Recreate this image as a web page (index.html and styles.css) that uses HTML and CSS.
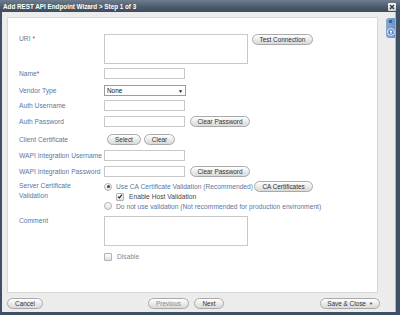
FILE: index.html
```html
<!DOCTYPE html>
<html>
<head>
<meta charset="utf-8">
<link rel="stylesheet" href="styles.css">
</head>
<body>
<div class="dialog">
  <div class="titlebar">
    <span class="title">Add REST API Endpoint Wizard &gt; Step 1 of 3</span>
    <span class="close"><svg width="8" height="8" viewBox="0 0 8 8"><path d="M2 2 L6 6 M6 2 L2 6" stroke="#333" stroke-width="1.3" fill="none"/></svg></span>
  </div>
  <div class="frame">
    <div class="main">
      <div class="pane">
        <div class="form">
          <div class="row r-uri">
            <div class="label top">URI <span class="req">*</span></div>
            <div class="textarea"></div>
            <span class="btn btn-test">Test Connection</span>
          </div>
          <div class="row r-name">
            <div class="label">Name<span class="req">*</span></div>
            <div class="input"></div>
          </div>
          <div class="row r-vendor">
            <div class="label">Vendor Type</div>
            <div class="select"><span>None</span><span class="arrow">▼</span></div>
          </div>
          <div class="row r-authu">
            <div class="label">Auth Username</div>
            <div class="input"></div>
          </div>
          <div class="row r-authp">
            <div class="label">Auth Password</div>
            <div class="input"></div>
            <span class="btn btn-clear">Clear Password</span>
          </div>
          <div class="row r-cert">
            <div class="label">Client Certificate</div>
            <span class="btn btn-select">Select</span>
            <span class="btn btn-clr">Clear</span>
          </div>
          <div class="row r-wapiu">
            <div class="label">WAPI Integration Username</div>
            <div class="input"></div>
          </div>
          <div class="row r-wapip">
            <div class="label">WAPI Integration Password</div>
            <div class="input"></div>
            <span class="btn btn-clear">Clear Password</span>
          </div>
          <div class="row r-server">
            <div class="label top">Server Certificate<br>Validation</div>
            <div class="options">
              <div class="opt opt1"><span class="radio checked"></span><span class="otext">Use CA Certificate Validation (Recommended)</span><span class="btn btn-ca">CA Certificates</span></div>
              <div class="opt opt2"><span class="check checked"><svg width="7" height="7" viewBox="0 0 7 7"><path d="M1.2 3.6 L2.8 5.2 L5.8 1.4" stroke="#222" stroke-width="1.3" fill="none"/></svg></span><span class="otext dark">Enable Host Validation</span></div>
              <div class="opt opt3"><span class="radio"></span><span class="otext">Do not use validation (Not recommended for production environment)</span></div>
            </div>
          </div>
          <div class="row r-comment">
            <div class="label top">Comment</div>
            <div class="textarea"></div>
          </div>
          <div class="row r-disable">
            <div class="label"></div>
            <span class="check"></span><span class="dtext">Disable</span>
          </div>
        </div>
      </div>
      <div class="side">
        <div class="tab">
          <span class="chev">«</span>
          <svg class="help" width="8" height="8" viewBox="0 0 8 8"><circle cx="4" cy="4" r="3.4" fill="#4f7fc0" stroke="#fff" stroke-width="0.9"/><path d="M4 2 L2.3 4 H3.4 V6 H4.6 V4 H5.7 Z" fill="#fff"/></svg>
        </div>
      </div>
    </div>
    <div class="footer">
      <span class="btn btn-cancel">Cancel</span>
      <span class="btn btn-prev disabled">Previous</span>
      <span class="btn btn-next">Next</span>
      <span class="btn btn-save">Save &amp; Close <span class="caret">▼</span></span>
    </div>
  </div>
</div>
</body>
</html>
```
FILE: styles.css
```css
html, body {
  margin: 0;
  padding: 0;
  width: 400px;
  height: 315px;
  overflow: hidden;
  font-family: "Liberation Sans", Arial, sans-serif;
}
.dialog {
  width: 400px;
  height: 315px;
  background: #3e5063;
  display: flex;
  flex-direction: column;
}
.titlebar {
  height: 12px;
  flex: none;
  display: flex;
  align-items: center;
  justify-content: space-between;
  padding: 0 4px 0 3px;
  background: linear-gradient(#6d7d8d, #4a5a6a 60%, #3d4c5b);
}
.title {
  color: #fff;
  font-weight: bold;
  font-size: 6.3px;
}
.close {
  width: 8px;
  height: 8px;
  margin-top: 2px;
  background: linear-gradient(#fafafa, #cfcfcf);
  border-radius: 1px;
  display: flex;
  align-items: center;
  justify-content: center;
}
.frame {
  flex: 1;
  margin: 0 4px 3px 2px;
  background: #ececec;
  border-right: 1px solid #a9b2bb;
  display: flex;
  flex-direction: column;
}
.main {
  flex: 1;
  display: flex;
  padding: 5px 0 0 5px;
  min-height: 0;
}
.pane {
  flex: none;
  width: 369px;
  background: #fff;
  border: 1px solid #d8d8d8;
}
.side {
  flex: 1;
  display: flex;
  justify-content: flex-end;
  padding-top: 1px;
}
.tab {
  width: 9px;
  height: 20px;
  border-radius: 3px 0 0 3px;
  background: linear-gradient(90deg, #86a7d2, #6e94c8);
  display: flex;
  flex-direction: column;
  align-items: center;
  padding-top: 1px;
  box-sizing: border-box;
}
.chev {
  font-size: 7px;
  line-height: 6px;
  color: #1c2f55;
  font-weight: bold;
}
.help {
  margin-top: 3px;
}
.form {
  padding: 16px 0 0 11px;
  display: flex;
  flex-direction: column;
}
.row {
  display: flex;
  align-items: center;
  height: 11px;
}
.label {
  width: 85px;
  flex: none;
  font-size: 6.7px;
  color: #60769c;
  line-height: 10px;
  white-space: nowrap;
}
.label.top {
  align-self: flex-start;
}
.req {
  color: #d0393b;
}
.input {
  width: 79px;
  height: 9px;
  border: 1px solid #c8c8c8;
  background: #fff;
}
.textarea {
  width: 142px;
  height: 28px;
  border: 1px solid #c8c8c8;
  background: #fff;
  align-self: flex-start;
}
.select {
  height: 9px;
  border: 1px solid #9c9c9c;
  background: #fff;
  display: flex;
  align-items: center;
  justify-content: space-between;
  font-size: 6.4px;
  color: #111;
  padding: 0 2px 0 2px;
  width: 76px;
}
.arrow {
  font-size: 5px;
}
.btn {
  display: inline-flex;
  align-items: center;
  justify-content: center;
  height: 9px;
  border: 1px solid #a9a9a9;
  border-radius: 6px;
  background: linear-gradient(#ffffff, #e9e9e9 55%, #d9d9d9);
  font-size: 6.4px;
  color: #333;
  white-space: nowrap;
  box-sizing: content-box;
}
.r-uri { height: 30px; margin-bottom: 4px; align-items: flex-start; }
.btn-test { width: 59px; margin-left: 4px; }
.r-name { margin-bottom: 6px; }
.r-vendor { margin-bottom: 4px; }
.r-authu { margin-bottom: 5px; }
.r-authp { margin-bottom: 7px; }
.btn-clear { width: 58px; margin-left: 5px; }
.r-cert { margin-bottom: 5px; }
.btn-select { width: 32px; margin-left: 3px; }
.btn-clr { width: 29px; margin-left: 3px; }
.r-wapiu { margin-bottom: 5px; }
.r-wapip { margin-bottom: 4px; }
.r-server { height: 31px; margin-bottom: 4px; align-items: flex-start; }
.options {
  display: flex;
  flex-direction: column;
}
.opt {
  display: flex;
  align-items: center;
  font-size: 6.7px;
  white-space: nowrap;
}
.opt1 { height: 11px; }
.opt2 { height: 9px; padding-left: 12px; }
.opt3 { height: 10px; }
.otext {
  color: #60769c;
}
.otext.dark {
  color: #444;
}
.radio {
  width: 6px;
  height: 6px;
  border-radius: 50%;
  border: 1px solid #b3b3b3;
  background: linear-gradient(#fff, #e2e2e2);
  margin-right: 4px;
  display: inline-flex;
  align-items: center;
  justify-content: center;
}
.radio.checked::after {
  content: "";
  width: 3px;
  height: 3px;
  border-radius: 50%;
  background: #444;
}
.check {
  width: 6px;
  height: 6px;
  border: 1px solid #b3b3b3;
  border-radius: 1px;
  background: linear-gradient(#fff, #e0e0e0);
  margin-right: 5px;
  display: inline-flex;
  align-items: center;
  justify-content: center;
}
.check svg { display: block; }
.btn-ca { width: 57px; margin-left: 1px; }
.r-comment { height: 30px; margin-bottom: 6px; align-items: flex-start; }
.r-disable { height: 9px; }
.dtext {
  font-size: 6.7px;
  color: #888;
}
.footer {
  height: 19px;
  flex: none;
  display: flex;
  align-items: flex-start;
  padding: 5px 0 0 5px;
  box-sizing: border-box;
}
.btn-cancel { width: 34px; }
.btn-prev { width: 39px; margin-left: 105px; color: #8a8a8a; }
.btn-next { width: 28px; margin-left: 5px; }
.btn-save { width: 58px; margin-left: 96px; }
.caret { font-size: 4px; margin-left: 3px; }
```
